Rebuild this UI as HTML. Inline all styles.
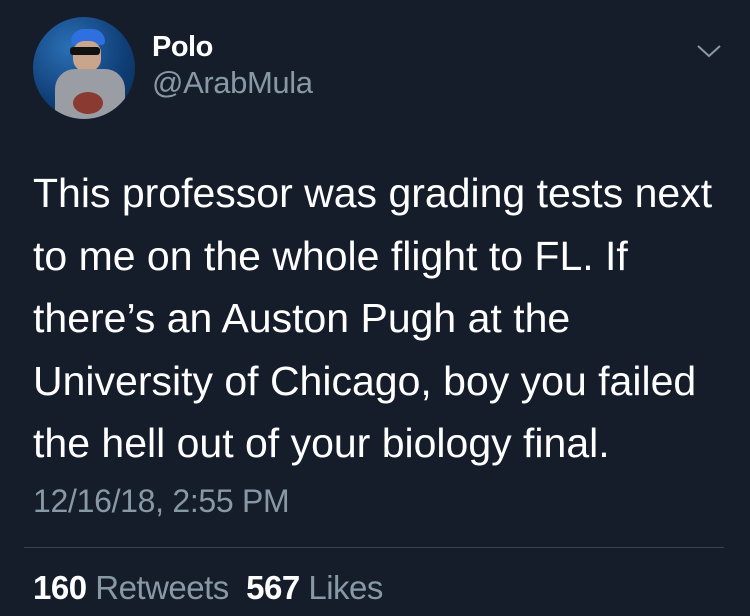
<!DOCTYPE html>
<html><head><style>
body{margin:0;width:750px;height:616px;background:#161d2a;font-family:"Liberation Sans",sans-serif;position:relative;overflow:hidden}
.a{position:absolute;white-space:nowrap}
</style></head><body>
<div class="a" style="left:33px;top:17px;width:102px;height:102px;border-radius:50%;overflow:hidden;background:radial-gradient(circle at 35% 30%,#2a6fb5,#0f3d75 60%,#0a2a50)">
 <div style="position:absolute;left:38px;top:12px;width:34px;height:16px;border-radius:14px 14px 4px 4px;background:#2f6fe0"></div>
 <div style="position:absolute;left:40px;top:24px;width:28px;height:30px;border-radius:40%;background:#c9a58c"></div>
 <div style="position:absolute;left:37px;top:30px;width:30px;height:8px;background:#111;border-radius:3px"></div>
 <div style="position:absolute;left:22px;top:52px;width:70px;height:60px;border-radius:20px 20px 0 0;background:#9a9ea4"></div>
 <div style="position:absolute;left:40px;top:75px;width:30px;height:22px;border-radius:50%;background:#8a3a30"></div>
</div>
<div class="a" style="left:152px;top:31px;font-size:29px;font-weight:bold;color:#fff;letter-spacing:-0.5px">Polo</div>
<div class="a" style="left:152px;top:65px;font-size:31px;color:#8899a6;letter-spacing:-0.4px">@ArabMula</div>
<svg class="a" style="left:695px;top:42px" width="28" height="18"><path d="M3 4 L14 14 L25 4" stroke="#8899a6" stroke-width="2" fill="none"/></svg>
<div class="a" style="left:33px;top:162px;font-size:41px;line-height:62.5px;color:#fff;letter-spacing:0px">This professor was grading tests next<br>to me on the whole flight to FL. If<br>there’s an Auston Pugh at the<br>University of Chicago, boy you failed<br>the hell out of your biology final.</div>
<div class="a" style="left:33px;top:483px;font-size:32px;color:#8899a6;letter-spacing:-0.3px">12/16/18, 2:55 PM</div>
<div class="a" style="left:24px;top:547px;width:700px;height:1px;background:#38444d"></div>
<div class="a" style="left:33px;top:569px;font-size:33px;color:#8899a6;letter-spacing:-0.5px"><b style="color:#fff">160</b> Retweets&nbsp; <b style="color:#fff">567</b> Likes</div>
</body></html>
